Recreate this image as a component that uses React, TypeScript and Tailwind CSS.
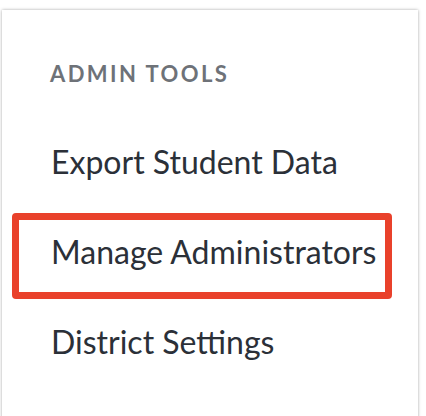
const items = [
	{ label: "Export Student Data", active: false },
	{ label: "Manage Administrators", active: true },
	{ label: "District Settings", active: false },
];

function AdminToolsMenu() {
	return (
		<nav className="flex h-[420px] flex-col bg-white pt-[47px] shadow-[0_0_3px_rgba(0,0,0,0.35)]">
			<h2 className="pl-[48px] text-[22px] font-bold tracking-[0.11em] text-[#6e7278]">ADMIN TOOLS</h2>

			<ul className="mt-[33px] flex flex-col gap-[4px] pl-[10px]">
				{items.map((item) => (
					<li
						key={item.label}
						className={
							item.active
								? "h-[86px] w-[380px] rounded-[4px] border-[7px] border-[#e9412b] pt-[8px] pl-[32px]"
								: "h-[86px] w-[380px] border-[7px] border-transparent pt-[8px] pl-[32px]"
						}
					>
						<a href="#" className="text-[32px] text-[#2b3038]">
							{item.label}
						</a>
					</li>
				))}
			</ul>
		</nav>
	);
}

export default function App() {
	return (
		<div className="h-[416px] w-[426px] overflow-hidden bg-white pt-[10px] pl-[2px] font-['Lato',sans-serif]">
			<div className="w-[416px]">
				<AdminToolsMenu />
			</div>
		</div>
	);
}
